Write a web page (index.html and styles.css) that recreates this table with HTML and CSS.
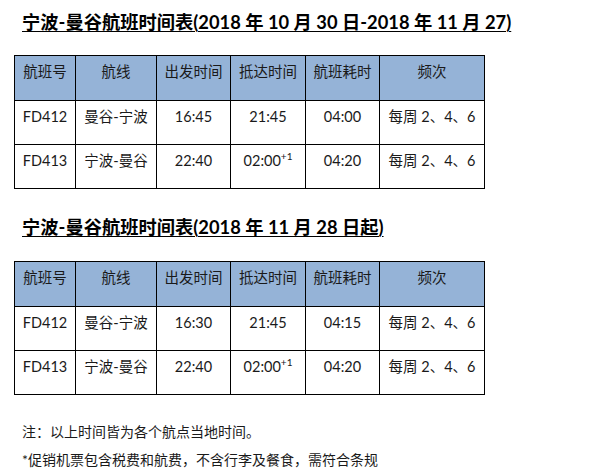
FILE: index.html
```html
<!DOCTYPE html>
<html lang="zh-CN">
<head>
<meta charset="utf-8">
<title>宁波-曼谷航班时间表</title>
<link rel="stylesheet" href="styles.css">
</head>
<body>
<div class="page">
  <h2 class="title">宁波-曼谷航班时间表(2018 年 10 月 30 日-2018 年 11 月 27)</h2>
  <table class="sched">
    <colgroup>
      <col class="c1"><col class="c2"><col class="c3"><col class="c4"><col class="c5"><col class="c6">
    </colgroup>
    <tr class="head"><td>航班号</td><td>航线</td><td>出发时间</td><td>抵达时间</td><td>航班耗时</td><td>频次</td></tr>
    <tr><td>FD412</td><td>曼谷-宁波</td><td>16:45</td><td>21:45</td><td>04:00</td><td>每周 2、4、6</td></tr>
    <tr><td>FD413</td><td>宁波-曼谷</td><td>22:40</td><td>02:00<sup>+1</sup></td><td>04:20</td><td>每周 2、4、6</td></tr>
  </table>

  <h2 class="title second">宁波-曼谷航班时间表(2018 年 11 月 28 日起)</h2>
  <table class="sched">
    <colgroup>
      <col class="c1"><col class="c2"><col class="c3"><col class="c4"><col class="c5"><col class="c6">
    </colgroup>
    <tr class="head"><td>航班号</td><td>航线</td><td>出发时间</td><td>抵达时间</td><td>航班耗时</td><td>频次</td></tr>
    <tr><td>FD412</td><td>曼谷-宁波</td><td>16:30</td><td>21:45</td><td>04:15</td><td>每周 2、4、6</td></tr>
    <tr><td>FD413</td><td>宁波-曼谷</td><td>22:40</td><td>02:00<sup>+1</sup></td><td>04:20</td><td>每周 2、4、6</td></tr>
  </table>

  <div class="notes">
    <p>注：以上时间皆为各个航点当地时间。</p>
    <p>*促销机票包含税费和航费，不含行李及餐食，需符合条规</p>
  </div>
</div>
</body>
</html>
```

FILE: styles.css
```css
html, body {
  margin: 0;
  padding: 0;
  background: #ffffff;
}
body {
  font-family: "Lato", "Noto Sans CJK SC", sans-serif;
  color: #1a1a1a;
}
.page {
  padding: 11px 0 0 14px;
}
.title {
  margin: 0 0 0 8px;
  font-size: 18.3px;
  font-weight: bold;
  line-height: 22px;
  color: #000;
  text-decoration: underline;
  text-decoration-thickness: 1px;
  text-underline-offset: 2px;
}
.title.second {
  margin-top: 27px;
}
.sched {
  border-collapse: collapse;
  table-layout: fixed;
  width: 470px;
  margin-top: 22px;
  font-size: 14.5px;
}
.title.second + .sched {
  margin-top: 23px;
}
.c1 { width: 61px; }
.c2 { width: 81px; }
.c3 { width: 74px; }
.c4 { width: 75px; }
.c5 { width: 74px; }
.c6 { width: 105px; }
.sched td {
  border: 1px solid #000;
  padding: 6px 0 0 0;
  vertical-align: top;
  text-align: center;
  line-height: 20px;
  white-space: nowrap;
  box-sizing: border-box;
  height: 44px;
}
.sched .head td {
  background: #95b3d7;
  height: 45px;
}
.sched sup {
  font-size: 10px;
  line-height: 0;
  vertical-align: 6px;
}
.notes {
  margin: 27px 0 0 8px;
  font-size: 14px;
  line-height: 20px;
}
.notes p {
  margin: 0 0 8px 0;
}
```
